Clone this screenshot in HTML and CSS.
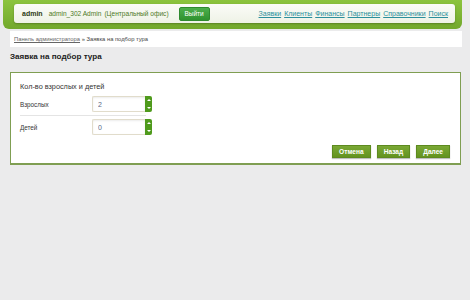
FILE: index.html
```html
<!DOCTYPE html>
<html>
<head>
    <meta charset="utf-8">
    <title>Заявка на подбор тура</title>
    <link rel="stylesheet" href="styles.css">
</head>
<body>
    <div class="header">
        <div class="topbar">
            <span class="user">admin</span>
            <span class="who">admin_302 Admin</span>
            <span class="who">(Центральный офис)</span>
            <button class="logout">Выйти</button>
            <div class="menu">
                <a href="#">Заявки</a>
                <a href="#">Клиенты</a>
                <a href="#">Финансы</a>
                <a href="#">Партнеры</a>
                <a href="#">Справочники</a>
                <a href="#">Поиск</a>
            </div>
        </div>
    </div>
    <div class="crumbs">
        <a href="#">Панель администратора</a> &raquo; Заявка на подбор тура
    </div>
    <h1 class="title">Заявка на подбор тура</h1>
    <div class="panel">
        <div class="legend">Кол-во взрослых и детей</div>
        <div class="row">
            <label>Взрослых</label>
            <div class="spin">
                <input type="text" value="2">
                <span class="arrows"><i class="up"></i><i class="down"></i></span>
            </div>
        </div>
        <div class="divider"></div>
        <div class="row">
            <label>Детей</label>
            <div class="spin">
                <input type="text" value="0">
                <span class="arrows"><i class="up"></i><i class="down"></i></span>
            </div>
        </div>
        <div class="actions">
            <button class="btn">Отмена</button>
            <button class="btn">Назад</button>
            <button class="btn">Далее</button>
        </div>
    </div>
</body>
</html>
```

FILE: styles.css
```css
body {
    margin: 0;
    background-color: #ebebec;
    font-family: "Liberation Sans", Arial, sans-serif;
    color: #333;
}
.header {
    margin: 0 8px 0 3px;
    height: 29px;
    box-sizing: border-box;
    padding: 4px 7px 0 11px;
    background: linear-gradient(#8cc43e, #72a82c);
    border-radius: 0 0 6px 6px;
}
.topbar {
    height: 19px;
    display: flex;
    align-items: center;
    padding: 0 0 0 8px;
    background: linear-gradient(#fbfcf8, #eef2e6);
    border-radius: 3px;
    box-shadow: 0 1px 2px rgba(0, 0, 0, 0.25);
    font-size: 6.6px;
}
.user {
    font-weight: bold;
    font-size: 7px;
    color: #2d3a14;
    margin-right: 6px;
}
.who {
    color: #4e7a26;
    margin-right: 3px;
}
.logout {
    margin-left: 7px;
    width: 31px;
    height: 14px;
    padding: 0;
    border: 1px solid #2f8a2f;
    border-radius: 2px;
    background: linear-gradient(#4cae4c, #2f922f);
    color: #fff;
    font-family: inherit;
    font-size: 6.5px;
}
.menu {
    margin-left: auto;
    margin-right: 7px;
    display: flex;
    gap: 3px;
}
.menu a {
    color: #2b8f9c;
    font-size: 7px;
}
.crumbs {
    margin: 2px 8px 0 10px;
    height: 16px;
    line-height: 16px;
    padding-left: 4px;
    background: #fff;
    font-size: 5.8px;
    color: #444;
}
.crumbs a {
    color: #666;
}
.title {
    margin: 3px 0 0 10px;
    height: 14px;
    line-height: 14px;
    font-size: 8.1px;
    font-weight: bold;
    color: #1c1c1c;
}
.panel {
    margin: 8px 9px 0 10px;
    height: 93px;
    box-sizing: border-box;
    border: 1px solid #7f9e52;
    border-bottom-width: 2px;
    background: #fff;
    padding: 9px 10px 0 9px;
}
.legend {
    font-size: 7.3px;
    color: #333;
    height: 10px;
    line-height: 10px;
    margin-bottom: 4px;
}
.row {
    display: flex;
    align-items: center;
    height: 16px;
}
.divider {
    width: 126px;
    height: 1px;
    margin: 3px 0 3px;
    background: #e4e4e4;
}
.row label {
    width: 72px;
    flex-shrink: 0;
    font-size: 6.3px;
    color: #333;
}
.spin {
    display: flex;
    height: 16px;
}
.spin input {
    width: 53px;
    height: 16px;
    box-sizing: border-box;
    border: 1px solid #e1dccb;
    border-right: none;
    border-radius: 2px 0 0 2px;
    padding: 0 0 0 5px;
    font-family: inherit;
    font-size: 7px;
    color: #5b6a86;
    box-shadow: inset 0 1px 2px rgba(0, 0, 0, 0.08);
}
.arrows {
    width: 7px;
    background: #4f9a1c;
    border-radius: 0 2px 2px 0;
    display: flex;
    flex-direction: column;
    justify-content: space-around;
    align-items: center;
}
.arrows i {
    width: 0;
    height: 0;
    border-left: 2px solid transparent;
    border-right: 2px solid transparent;
}
.arrows .up {
    border-bottom: 2px solid #fff;
}
.arrows .down {
    border-top: 2px solid #fff;
}
.actions {
    display: flex;
    justify-content: flex-end;
    gap: 6px;
    margin-top: 10px;
}
.btn {
    height: 13px;
    padding: 0 6px;
    border: 1px solid #5d8a1f;
    background: linear-gradient(#7aa835, #63931f);
    color: #fff;
    font-family: inherit;
    font-weight: bold;
    font-size: 6.6px;
    box-shadow: 0 1px 1px rgba(0, 0, 0, 0.25);
}
```
